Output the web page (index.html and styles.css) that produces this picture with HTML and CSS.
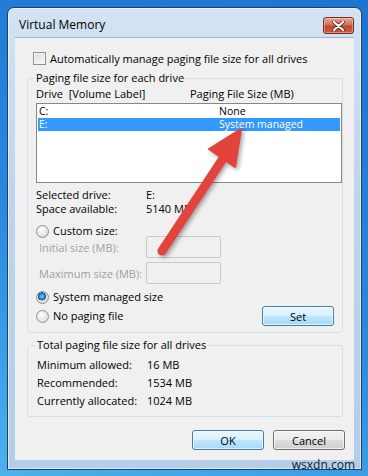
FILE: index.html
```html
<!DOCTYPE html>
<html lang="en">
<head>
<meta charset="UTF-8">
<title>Virtual Memory</title>
<link rel="stylesheet" href="styles.css">
</head>
<body>

<div class="desktop">
    <div class="window">
        <div class="titlebar">
            <span class="title">Virtual Memory</span>
            <button class="close-btn" aria-label="Close">
                <svg width="13" height="10" viewBox="0 0 13 10">
                    <path d="M2 1 L11 9 M11 1 L2 9" stroke="#5a1a12" stroke-width="3.6" stroke-linecap="round"/>
                    <path d="M2 1 L11 9 M11 1 L2 9" stroke="#ffffff" stroke-width="2.2" stroke-linecap="round"/>
                </svg>
            </button>
        </div>

        <div class="client">
            <label class="check-row">
                <span class="checkbox"></span>
                Automatically manage paging file size for all drives
            </label>

            <!-- ドライブごとのページングファイル -->
            <fieldset class="group group-drives">
                <legend>Paging file size for each drive</legend>
                <div class="list-head">
                    <span class="col-drive">Drive&nbsp;&nbsp;[Volume Label]</span>
                    <span class="col-size">Paging File Size (MB)</span>
                </div>
                <div class="listbox">
                    <div class="list-row"><span class="col-drive">C:</span><span class="col-size">None</span></div>
                    <div class="list-row selected"><span class="col-drive">E:</span><span class="col-size">System managed</span></div>
                </div>

                <div class="info-grid">
                    <span>Selected drive:</span><span>E:</span>
                    <span>Space available:</span><span>5140 MB</span>
                </div>

                <div class="radio-row custom-row"><span class="radio"></span>Custom size:</div>
                <div class="field-row disabled">
                    <span class="field-label">Initial size (MB):</span>
                    <span class="textbox"></span>
                </div>
                <div class="field-row disabled">
                    <span class="field-label">Maximum size (MB):</span>
                    <span class="textbox"></span>
                </div>

                <div class="bottom-row">
                    <div class="radios">
                        <div class="radio-row"><span class="radio checked"></span>System managed size</div>
                        <div class="radio-row"><span class="radio"></span>No paging file</div>
                    </div>
                    <button class="btn btn-default set-btn">Set</button>
                </div>
            </fieldset>

            <!-- 全ドライブの合計 -->
            <fieldset class="group group-total">
                <legend>Total paging file size for all drives</legend>
                <div class="total-grid">
                    <span>Minimum allowed:</span><span>16 MB</span>
                    <span>Recommended:</span><span>1534 MB</span>
                    <span>Currently allocated:</span><span>1024 MB</span>
                </div>
            </fieldset>

            <div class="actions">
                <button class="btn btn-default">OK</button>
                <button class="btn">Cancel</button>
            </div>
        </div>
    </div>

    <svg class="arrow" width="368" height="476" viewBox="0 0 368 476">
        <line x1="162" y1="251" x2="226" y2="154" stroke="#e2433b" stroke-width="9" stroke-linecap="round"/>
        <polygon points="241,129 209,149 235,167" fill="#e2433b" stroke="#e2433b" stroke-width="2" stroke-linejoin="round"/>
    </svg>

    <div class="watermark">wsxdn.com</div>
</div>

</body>
</html>
```

FILE: styles.css
```css
body {
    margin: 0;
    padding: 0;
    font-family: 'Open Sans', 'Noto Sans', sans-serif;
    font-size: 11px;
    color: #000;
}

/* デスクトップ背景 */
.desktop {
    position: relative;
    width: 368px;
    height: 476px;
    padding: 7px 0 0 7px;
    box-sizing: border-box;
    overflow: hidden;
    background: linear-gradient(200deg, #1c74d0 0%, #2a88de 55%, #49b2ee 100%);
}

/* ウィンドウ枠 */
.window {
    width: 355px;
    height: 463px;
    box-sizing: border-box;
    padding: 0 7px 8px 7px;
    border: 1px solid #23405e;
    border-radius: 7px 7px 0 0;
    background: linear-gradient(180deg, #d3e3f3 0%, #bed4ec 40%, #b5cde8 100%);
    box-shadow: inset 0 0 0 1px rgba(255, 255, 255, 0.55);
}

.titlebar {
    height: 29px;
    display: flex;
    justify-content: space-between;
    align-items: flex-start;
}

.title {
    margin: 9px 0 0 4px;
    font-size: 12px;
    line-height: 16px;
}

.close-btn {
    width: 31px;
    height: 17px;
    margin: 9px 0 0 0;
    padding: 0;
    border: 1px solid #7a2b20;
    border-radius: 3px;
    background: linear-gradient(180deg, #e8a495 0%, #d2705e 45%, #bf4630 55%, #c95a3f 100%);
    box-shadow: inset 0 0 0 1px rgba(255, 255, 255, 0.35);
    display: flex;
    align-items: center;
    justify-content: center;
}

/* クライアント領域 */
.client {
    height: 423px;
    box-sizing: border-box;
    padding: 14px 0 0 12px;
    background-color: #f0f0f0;
    border-top: 1px solid #9fb6cf;
}

.check-row {
    display: flex;
    align-items: center;
    gap: 4px;
    height: 13px;
    margin-left: 6px;
    line-height: 13px;
}

.checkbox {
    width: 11px;
    height: 11px;
    border: 1px solid #8f8f8f;
    background: linear-gradient(135deg, #dcdcdc 0%, #f7f7f7 100%);
    box-shadow: inset 0 0 0 1px #f4f4f4;
}

.group {
    margin: 0;
    min-width: 0;
    width: 316px;
    box-sizing: border-box;
    border: 1px solid #d5dfe5;
    border-radius: 3px;
}

.group legend {
    padding: 0 2px;
    margin-left: -2px;
    line-height: 16px;
}

.group-drives {
    margin-top: 5px;
    padding: 0 0 9px 8px;
}

.list-head {
    display: flex;
    height: 16px;
    line-height: 16px;
}

.list-head .col-drive {
    width: 154px;
}

.listbox {
    width: 306px;
    height: 80px;
    box-sizing: border-box;
    margin-top: 1px;
    padding: 0 1px 1px;
    border: 1px solid #828790;
    background-color: #fff;
}

.list-row {
    display: flex;
    height: 14px;
    line-height: 14px;
    padding-left: 1px;
    font-size: 10.5px;
}

.list-row .col-drive {
    width: 180px;
}

.list-row.selected {
    height: 13px;
    line-height: 13px;
    background-color: #3399ff;
    color: #fff;
}

.info-grid {
    display: grid;
    grid-template-columns: 110px auto;
    margin-top: 5px;
    line-height: 14px;
}

.radio-row {
    display: flex;
    align-items: center;
    gap: 4px;
    height: 14px;
    line-height: 14px;
}

.custom-row {
    margin-top: 8px;
}

.radio {
    width: 11px;
    height: 11px;
    border: 1px solid #8e8f8f;
    border-radius: 50%;
    background: radial-gradient(circle at 40% 35%, #ffffff 0%, #e6e6e6 55%, #cfcfcf 100%);
}

.radio.checked {
    background:
        radial-gradient(circle at 45% 40%, #8fd3f7 0%, #2c7fc0 30%, #17558f 44%, transparent 48%),
        radial-gradient(circle at 40% 35%, #ffffff 0%, #e6e6e6 55%, #cfcfcf 100%);
}

.field-row {
    display: flex;
    align-items: center;
    height: 22px;
    margin-top: 4px;
}

.custom-row + .field-row {
    margin-top: -2px;
}

.field-label {
    width: 107px;
    padding-left: 3px;
}

.disabled {
    color: #a0a0a0;
}

.textbox {
    width: 73px;
    height: 20px;
    border: 1px solid #c9c9c9;
    border-radius: 2px;
    background-color: #f0f0f0;
}

.bottom-row {
    display: flex;
    justify-content: space-between;
    align-items: flex-end;
    margin-top: 6px;
    padding-right: 8px;
}

.radios {
    display: flex;
    flex-direction: column;
    gap: 5px;
}

/* ボタン */
.btn {
    width: 72px;
    height: 20px;
    padding: 0;
    font-family: inherit;
    font-size: 11px;
    color: #000;
    border: 1px solid #707070;
    border-radius: 3px;
    background: linear-gradient(180deg, #f2f2f2 0%, #ebebeb 50%, #dddddd 51%, #cfcfcf 100%);
    box-shadow: inset 0 0 0 1px rgba(255, 255, 255, 0.7);
}

.btn-default {
    border-color: #3c7fb1;
    background: linear-gradient(180deg, #eaf6fd 0%, #d9f0fc 50%, #bee6fd 51%, #a7d9f5 100%);
}

.set-btn {
    margin-bottom: -3px;
}

.group-total {
    margin-top: 4px;
    padding: 0 0 6px 9px;
}

.total-grid {
    display: grid;
    grid-template-columns: 110px auto;
    margin-top: 3px;
    line-height: 18px;
}

.actions {
    display: flex;
    justify-content: flex-end;
    gap: 9px;
    margin-top: 13px;
    padding-right: 9px;
}

/* 赤い矢印 */
.arrow {
    position: absolute;
    top: 0;
    left: 0;
    pointer-events: none;
    filter: drop-shadow(2px 2px 2px rgba(0, 0, 0, 0.35));
}

.watermark {
    position: absolute;
    right: 13px;
    bottom: 5px;
    font-size: 12px;
    line-height: 12px;
    color: #0f2136;
}
```
